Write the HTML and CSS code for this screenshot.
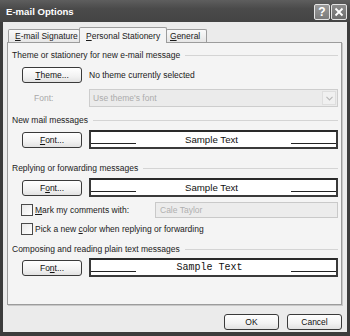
FILE: index.html
```html
<!DOCTYPE html>
<html>
  <head>
    <meta charset='utf-8' />
    <title>E-mail Options</title>
    <link rel="stylesheet" href="styles.css">
  </head>
  <body>
    <div class='window'>
      <div class='titlebar'>
        <span class='title'>E-mail Options</span>
        <div class='caption-btns'>
          <span class='cbtn'>?</span>
          <span class='cbtn close'>
            <svg width='10' height='10' viewBox='0 0 10 10'><path d='M1.5 1.5 L8.5 8.5 M8.5 1.5 L1.5 8.5' stroke='#fff' stroke-width='1.8' /></svg>
          </span>
        </div>
      </div>
      <div class='client'>
        <div class='tabs'>
          <div class='tab'><u>E</u>-mail Signature</div>
          <div class='tab selected'><u>P</u>ersonal Stationery</div>
          <div class='tab'><u>G</u>eneral</div>
        </div>
        <div class='panel'>
          <div class='group first'><span>Theme or stationery for new e-mail message</span></div>
          <div class='row theme-row'>
            <div class='btn'><u>T</u>heme...</div>
            <span class='note'>No theme currently selected</span>
          </div>
          <div class='row font-row'>
            <span class='dim-label'>Font:</span>
            <div class='select'>
              <span>Use theme's font</span>
              <span class='arrow'>
                <svg width='7' height='5' viewBox='0 0 7 5'><path d='M0.5 0.8 L3.5 3.8 L6.5 0.8' stroke='#b8b8b8' stroke-width='1.2' fill='none' /></svg>
              </span>
            </div>
          </div>

          <div class='group'><span>New mail messages</span></div>
          <div class='row sample-row'>
            <div class='btn'><u>F</u>ont...</div>
            <div class='sample'><i class='line'></i><span>Sample Text</span><i class='line'></i></div>
          </div>

          <div class='group g3'><span>Replying or forwarding messages</span></div>
          <div class='row sample-row'>
            <div class='btn'>F<u>o</u>nt...</div>
            <div class='sample'><i class='line'></i><span>Sample Text</span><i class='line'></i></div>
          </div>
          <div class='row check-row'>
            <span class='check'></span>
            <span class='check-label'><u>M</u>ark my comments with:</span>
            <div class='textbox'>Cale Taylor</div>
          </div>
          <div class='row check-row2'>
            <span class='check'></span>
            <span class='check-label'>Pick a new <u>c</u>olor when replying or forwarding</span>
          </div>

          <div class='group'><span>Composing and reading plain text messages</span></div>
          <div class='row sample-row last'>
            <div class='btn'>Fo<u>n</u>t...</div>
            <div class='sample mono'><i class='line'></i><span>Sample Text</span><i class='line'></i></div>
          </div>
        </div>
        <div class='footer'>
          <div class='btn wide'>OK</div>
          <div class='btn wide'>Cancel</div>
        </div>
      </div>
    </div>
  </body>
</html>
```

FILE: styles.css
```css
* {
  box-sizing: border-box;
}
body, html {
  margin: 0;
  padding: 0;
}
body {
  width: 350px;
  height: 336px;
  overflow: hidden;
  font-family: "Liberation Sans", Arial, sans-serif;
  font-size: 8.5px;
  color: #1a1a1a;
  background: #3a3a3a;
}
u {
  text-decoration: underline;
  text-underline-offset: 1px;
}
.window {
  width: 350px;
  height: 336px;
  background: #3c3c3c;
  padding: 0 3px 4px 3px;
  display: flex;
  flex-direction: column;
}
.titlebar {
  height: 22px;
  margin: 0 -3px;
  padding: 0 3px 0 6px;
  display: flex;
  align-items: center;
  justify-content: space-between;
  background: linear-gradient(#5e5e5e, #4a4a4a 40%, #444 100%);
}
.title {
  color: #fff;
  font-weight: bold;
  font-size: 9.6px;
  margin-top: 1px;
}
.caption-btns {
  display: flex;
  gap: 1px;
  margin-top: 1px;
}
.cbtn {
  width: 16px;
  height: 16px;
  border: 1px solid #e4e4e4;
  border-radius: 2px;
  background: linear-gradient(#9a9a9a, #7a7a7a);
  color: #fff;
  font-weight: bold;
  font-size: 12px;
  display: flex;
  align-items: center;
  justify-content: center;
}
.cbtn.close {
  background: linear-gradient(#8c8c8c, #6e6e6e);
}
.client {
  flex: 1;
  background: #ebebeb;
  padding: 5px 5px 0 4px;
  display: flex;
  flex-direction: column;
}
.tabs {
  display: flex;
  height: 15px;
  align-items: flex-end;
  padding-left: 1px;
  position: relative;
  z-index: 1;
}
.tab {
  height: 13px;
  padding: 0 5px;
  border: 1px solid #9c9c9c;
  border-bottom: none;
  border-radius: 2px 2px 0 0;
  background: linear-gradient(#fafafa, #e6e6e6);
  display: flex;
  align-items: center;
  margin-right: -1px;
  white-space: nowrap;
}
.tab:first-child {
  width: 72px;
  padding-left: 6px;
}
.tab.selected {
  height: 16px;
  width: 88px;
  margin-bottom: -1px;
  background: #f4f4f4;
  padding-left: 6px;
  z-index: 2;
}
.tab:last-child {
  width: 41px;
  padding-left: 3px;
}
.panel {
  width: 335px;
  height: 263px;
  border: 1px solid #9c9c9c;
  box-shadow: 1px 1px 0 #c8c8c8;
  background: #f4f4f4;
  padding: 7px 3px 0 4px;
  display: flex;
  flex-direction: column;
}
.group {
  height: 10px;
  display: flex;
  align-items: center;
  margin-top: 8px;
  color: #222;
}
.group.first {
  margin-top: 0;
}
.group.g3 {
  margin-top: 14px;
}
.group::after {
  content: '';
  flex: 1;
  height: 1px;
  background: #d4d4d4;
  margin-left: 5px;
}
.row {
  display: flex;
  align-items: center;
  padding-left: 10px;
}
.theme-row {
  height: 18px;
  margin-top: 6px;
}
.font-row {
  height: 18px;
  margin-top: 5px;
}
.sample-row {
  height: 19px;
  margin-top: 5px;
}
.sample-row.last {
  margin-top: 4px;
}
.check-row {
  height: 16px;
  margin-top: 5px;
}
.check-row2 {
  height: 14px;
  margin-top: 4px;
}
.btn {
  width: 60px;
  height: 16px;
  border: 1px solid #3a3a3a;
  border-radius: 3px;
  background: linear-gradient(#ffffff, #f2f2f2 60%, #e2e2e2);
  display: flex;
  align-items: center;
  justify-content: center;
  color: #111;
  flex-shrink: 0;
}
.note {
  margin-left: 7px;
}
.dim-label {
  color: #a8a8a8;
  width: 67px;
  padding-left: 12px;
}
.select {
  flex: 1;
  height: 18px;
  border: 1px solid #cdcdcd;
  background: #ebebeb;
  color: #ababab;
  display: flex;
  align-items: center;
  justify-content: space-between;
  padding: 0 1px 0 3px;
}
.arrow {
  width: 14px;
  height: 14px;
  border: 1px solid #dedede;
  background: #f0f0f0;
  display: flex;
  align-items: center;
  justify-content: center;
}
.sample {
  flex: 1;
  height: 19px;
  margin-left: 7px;
  border: 2px solid #3a3a3a;
  border-top-color: #2a2a2a;
  background: #fff;
  display: flex;
  align-items: center;
  font-size: 9.7px;
  color: #111;
}
.sample span {
  flex: 1;
  text-align: center;
  padding-right: 4px;
}
.sample .line {
  width: 45px;
  height: 1px;
  background: #222;
  align-self: flex-end;
  margin-bottom: 3px;
}
.sample.mono {
  font-family: "Liberation Mono", "Courier New", monospace;
  font-size: 10px;
}
.sample.mono span {
  padding-right: 8px;
}
.check {
  width: 12px;
  height: 12px;
  border: 1px solid #4a4a4a;
  background: linear-gradient(135deg, #e8e8e8, #fff);
  margin-left: -1px;
  flex-shrink: 0;
}
.check-label {
  margin-left: 2px;
}
.textbox {
  margin-left: auto;
  width: 183px;
  height: 16px;
  border: 1px solid #c9c9c9;
  background: #ececec;
  color: #b0b0b0;
  display: flex;
  align-items: center;
  padding-left: 4px;
}
.footer {
  display: flex;
  justify-content: flex-end;
  gap: 8px;
  margin-top: 9px;
  padding-right: 0;
  width: 335px;
}
.btn.wide {
  width: 55px;
}
```
